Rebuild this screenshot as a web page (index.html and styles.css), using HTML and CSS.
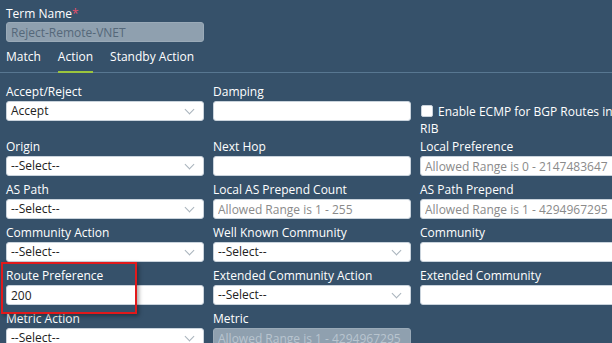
FILE: index.html
```html
<!DOCTYPE html>
<html lang="en">
<head>
    <meta charset="UTF-8">
    <title>Term - Action</title>
    <link rel="stylesheet" href="styles.css">
</head>
<body>
    <div class="term">
        <label class="field-label">Term Name<span class="req">*</span></label>
        <input class="text-input readonly" type="text" value="Reject-Remote-VNET" disabled>
    </div>

    <div class="tabs">
        <span class="tab">Match</span>
        <span class="tab active">Action</span>
        <span class="tab">Standby Action</span>
    </div>

    <div class="form-grid">
        <div class="field">
            <label class="field-label">Accept/Reject</label>
            <div class="select">Accept</div>
        </div>
        <div class="field">
            <label class="field-label">Damping</label>
            <input class="text-input" type="text">
        </div>
        <div class="field check-field">
            <label class="check"><span class="box"></span>Enable ECMP for BGP Routes in RIB</label>
        </div>

        <div class="field">
            <label class="field-label">Origin</label>
            <div class="select">--Select--</div>
        </div>
        <div class="field">
            <label class="field-label">Next Hop</label>
            <input class="text-input" type="text">
        </div>
        <div class="field">
            <label class="field-label">Local Preference</label>
            <input class="text-input" type="text" placeholder="Allowed Range is 0 - 2147483647">
        </div>

        <div class="field">
            <label class="field-label">AS Path</label>
            <div class="select">--Select--</div>
        </div>
        <div class="field">
            <label class="field-label">Local AS Prepend Count</label>
            <input class="text-input" type="text" placeholder="Allowed Range is 1 - 255">
        </div>
        <div class="field">
            <label class="field-label">AS Path Prepend</label>
            <input class="text-input" type="text" placeholder="Allowed Range is 1 - 4294967295">
        </div>

        <div class="field">
            <label class="field-label">Community Action</label>
            <div class="select">--Select--</div>
        </div>
        <div class="field">
            <label class="field-label">Well Known Community</label>
            <div class="select">--Select--</div>
        </div>
        <div class="field">
            <label class="field-label">Community</label>
            <input class="text-input" type="text">
        </div>

        <div class="field highlighted">
            <label class="field-label">Route Preference</label>
            <input class="text-input" type="text" value="200">
        </div>
        <div class="field">
            <label class="field-label">Extended Community Action</label>
            <div class="select">--Select--</div>
        </div>
        <div class="field">
            <label class="field-label">Extended Community</label>
            <input class="text-input" type="text">
        </div>

        <div class="field">
            <label class="field-label">Metric Action</label>
            <div class="select">--Select--</div>
        </div>
        <div class="field">
            <label class="field-label">Metric</label>
            <input class="text-input readonly" type="text" placeholder="Allowed Range is 1 - 4294967295" disabled>
        </div>
        <div class="field"></div>
    </div>
</body>
</html>
```

FILE: styles.css
```css
html, body {
    margin: 0;
    height: 100%;
    overflow: hidden;
}
body {
    background: #36516a;
    font-family: "Open Sans", "Liberation Sans", sans-serif;
    font-size: 12px;
    line-height: 15px;
    color: #fff;
    padding: 6px 0 0 6px;
    box-sizing: border-box;
    width: 630px;
}
.field-label {
    display: block;
    margin-bottom: 2px;
    white-space: nowrap;
}
.req {
    color: #e8506a;
}
.term .field-label {
    margin-bottom: 1px;
}
.text-input,
.select {
    display: block;
    box-sizing: border-box;
    width: 198px;
    height: 20px;
    margin: 0;
    padding: 0 4px;
    border: 1px solid #c9d3dc;
    border-radius: 3px;
    background: #fff;
    font-family: inherit;
    font-size: 12px;
    color: #222;
    outline: none;
}
.text-input::placeholder {
    color: #8a8a8a;
}
.text-input.readonly {
    background: #8fa0af;
    border-color: #9aaab8;
    color: #55687a;
}
.text-input.readonly::placeholder {
    color: #b9c5cf;
}
.select {
    position: relative;
    line-height: 18px;
}
.select::after {
    content: "";
    position: absolute;
    right: 10px;
    top: 4px;
    width: 6px;
    height: 6px;
    border-right: 1px solid #a9b3bc;
    border-bottom: 1px solid #a9b3bc;
    transform: rotate(45deg);
}
.tabs {
    display: flex;
    gap: 17px;
    margin: 7px 0 0 -6px;
    padding-left: 6px;
    border-bottom: 1px solid #587791;
}
.tab {
    padding-bottom: 7px;
    border-bottom: 2px solid transparent;
    margin-bottom: -1px;
}
.tab.active {
    border-bottom-color: #9bc53d;
}
.form-grid {
    display: grid;
    grid-template-columns: 198px 198px 198px;
    column-gap: 9px;
    row-gap: 6px;
    margin-top: 11px;
}
.check-field {
    padding-top: 19px;
    margin-bottom: -4px;
}
.check {
    display: block;
    line-height: 17px;
    white-space: normal;
    width: 200px;
}
.box {
    display: inline-block;
    width: 12px;
    height: 12px;
    margin: 0 5px 0 1px;
    vertical-align: -1px;
    box-sizing: border-box;
    background: #fff;
    border: 1px solid #c9d3dc;
    border-radius: 2px;
}
.highlighted {
    position: relative;
}
.highlighted::before {
    content: "";
    position: absolute;
    left: -5px;
    top: -6px;
    width: 136px;
    height: 52px;
    box-sizing: border-box;
    border: 2px solid #e2191b;
    box-shadow: 2px 2px 4px rgba(0, 0, 0, 0.35);
    pointer-events: none;
    z-index: 2;
}
```
